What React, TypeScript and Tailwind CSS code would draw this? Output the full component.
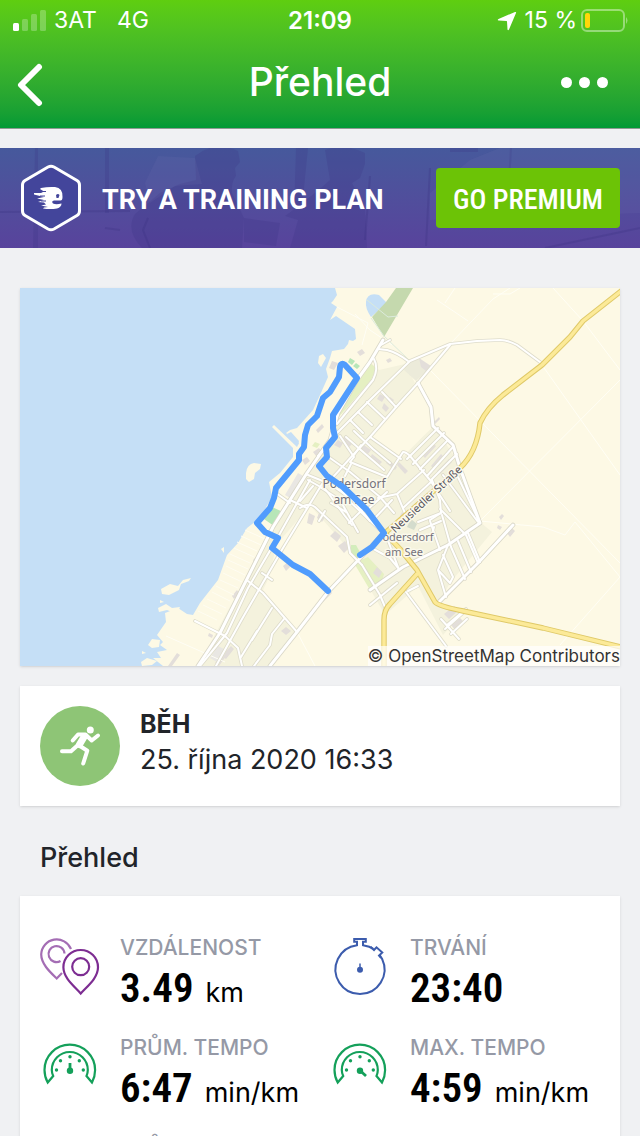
import type { ReactNode } from "react";

const MINOR_ROADS = [
	"M540 362L517 345Q508 340 500 340L477 341L450 344L410 361L370 400L337 433L318 456",
	"M450 345L418 383L397 406L370 437L353 455L334 476",
	"M408 361Q398 353 387 350L378 349",
	"M381 345L390 340",
	"M374 359Q379 368 373 380L337 424",
	"M310 480L278 537L248 588L227 633L200 666",
	"M322 484L283 548L242 619L216 666",
	"M248 581L263 593L297 632",
	"M262 573L272 580M290 500L307 508M276 493L290 503",
	"M272 608L252 640M257 631L241 657M284 619L272 634L270 645L254 666",
	"M195 621L225 636L238 648L242 666",
	"M382 392L396 407M367 402L385 419M358 412L372 425M350 420L363 433",
	"M340 436L354 457L350 462L387 477L403 452Q406 452 410 456L430 480L450 511",
	"M354 431L373 449L390 463M346 437L362 451L384 470",
	"M370 437L401 459M330 458L350 472L380 497L394 513",
	"M308 475L330 484L353 500L370 521",
	"M308 480L326 490L345 516L352 525",
	"M320 487L340 500L358 532M331 503L346 512M325 511L319 521",
	"M300 508Q309 502 315 507L347 537L350 553L362 565",
	"M345 497L380 530M367 510L387 492M349 523L363 509M337 487L349 498",
	"M351 464L345 476M361 445L354 455",
	"M407 459L438 428M413 464L444 433M420 469L448 440M427 476L453 447M431 480L457 454",
	"M378 498L397 494L424 470M397 494L407 518M403 508L432 481",
	"M432 480L440 500L441 513L430 520M440 490L461 470M440 509L456 525L466 535L478 563",
	"M443 475L458 495L478 522M457 475L480 523",
	"M418 522L441 513M420 530L441 521M434 527L432 535M442 515L451 547L465 579M430 521L440 550",
	"M458 541L471 572M468 533L480 562",
	"M448 545L438 570L446 597M438 570L450 583L453 577L443 555",
	"M387 538L398 567M370 547L390 558L399 569M418 586L408 591",
	"M362 565L380 595L385 607M406 592L446 646",
	"M447 625L466 609M441 619L459 639M451 634L467 619M445 629L464 612",
	"M397 583L370 605M392 500L374 519M313 486L300 501",
];

const MAIN_ROADS = [
	"M383 340L370 362L357 380L338 413L330 440L307 473L273 527L260 553L220 633L198 666",
	"M418 383L431 407L433 426L453 445L460 468L480 523L448 545L403 567L370 590",
	"M380 537L328 592L297 632L270 666",
	"M513 525L478 563L438 603",
];

const YELLOW_ROADS = [
	"M621 291L583 321L570 337L542 365L503 395Q487 408 480 423Q477 452 460 468L385 533L400 549L417 570L435 602Q438 606 463 611L543 628L621 647",
	"M417 574L390 604Q384 610 384 620L384 666",
];

const ROUTE =
	"M328 591L310 574L293 565L272 548L278 538L265 532L257 523L270 508L274 498L276 488L299 460L299 454L304 447L305 435L308 425L317 416L323 398L330 392L339 377L340 367Q341 362 345 365L357 378L333 415L333 428L335 437L326 448L327 457L319 466L327 476L343 487L367 510L384 533L372 547L360 555";

const BUILDINGS =
	"M357 352l5 -3 3 4 -5 3zM332 361l6 2 -4 7 -5 -2zM340 480l4 3 -3 3 -4 -3zM338 440l5 3 -3 5 -6 -3zM345 436l7 8 -3 3 -7 -8zM313 452l6 -4 3 4 -6 4zM316 430l6 -6 2 3 -6 6zM386 360l4 -2 2 3 -4 2zM419 358l12 8 -5 5 -5 -4zM380 394l5 3 -3 5 -5 -3zM384 403l5 5 -3 4 -4 -4zM390 397l4 3 -3 4 -4 -4zM361 443l10 7 -3 4 -9 -7zM372 454l10 8 -3 3 -9 -7zM388 459l9 8 -2 3 -9 -7zM399 462l9 9 -3 3 -8 -9zM422 455l11 -12 3 3 -11 12zM431 466l10 -12 3 3 -10 12zM437 471l12 -12 3 3 -12 12zM309 513l6 3 -3 9 -5 -2zM319 513l6 4 -3 5 -5 -4zM330 536l5 -5 6 5 -4 6zM338 546l7 -5 4 7 -5 5zM283 566l5 -4 3 4 -5 5zM253 560l5 -5 2 3 -5 6zM232 596l5 -6 2 3 -5 6zM321 598l8 -9 3 4 -9 9zM281 631l5 -4 5 4 -5 4zM209 633l4 2 -1 3 -4 -2zM226 651l5 -5 3 3 -8 10 -3 -2zM215 663l7 -9 4 2 -7 10zM377 567l5 5 -3 6 -6 -5zM444 614l10 -8 5 4 -10 9zM451 625l9 -7 4 4 -9 8zM499 517l3 -3 2 2 -3 4zM507 533l5 -5 3 3 -5 6zM498 525l4 2 -2 3 -3 -2zM434 422l5 -5 1 2 -5 5zM402 512l6 6 -3 3 -5 -5zM302 460l5 -3 3 4 -5 4zM180 655l-8 11 -4 0 9 -13z";

function RouteMap() {
	return (
		<svg viewBox="20 288 600 378" className="block w-full" role="img" aria-label="Mapa trasy">
			<rect x="20" y="288" width="600" height="378" fill="#c5dff6" />
			{/* shore */}
			<path fill="#fdf9e5" d="M335 288L337 295L333 301L331 303L337 307L330 320L336 316L355 329L356 339L353 341L349 340L348 344L344 349L332 351L330 358L326 369L328 377L320 395L313 410L297 428L290 430L286 433L299 443L297 447L274 425L272 427L293 448L293 457L280 473L269 482L272 497L260 518L247 528L238 543L227 555L218 580L200 603L193 615L187 614L178 608L165 613L166 622L157 635L163 642L160 645L167 650L157 652L161 658L153 658L163 666H620V288Z" />
			<path fill="#fdf9e5" d="M246 473Q247 464 254 463L261 464L260 469L255 473L254 479L249 482L246 479ZM319 356L323 354L326 358L321 367L318 363ZM221 549L224 547L224 553ZM161 589L170 584L178 586L183 580L191 578L189 581L181 584L179 590L169 595L162 594ZM160 600l4 2 -4 1zM158 608l8 -4 6 4 8 -1 -3 7 -10 -4 -8 2zM148 645l4 -6 8 1 -1 7 -7 1zM142 651l4 2 -4 1zM141 662l6 -4 10 3 -5 4 -10 1z" />
			<path fill="#c5dff6" d="M366 302Q367 292 379 295L387 303L371 317Q365 308 366 302ZM287 434L291 432L299 441L298 445Z" />
			<path fill="#c5d9ae" d="M396 288H413L384 337L372 317L386 302Z" />
			{/* built-up area */}
			<path fill="#f4f2dd" d="M370 362L379 370L405 364L415 383L396 407L370 437L401 457L434 426L460 465L480 522L492 532L450 583L438 604L466 610L443 635L418 586L385 615L362 575L345 545L308 503L284 547L263 590L297 630L270 666H198L273 527L318 460Z" />
			<path fill="#fdf9e5" d="M370 437L418 385L431 407L433 426L404 456L372 438ZM307 509L345 545L350 555L330 588L297 630L265 592L277 544Z" />
			<path fill="#ecebda" d="M409 361L419 358L430 368L416 381L404 370Z" />
			<path fill="#e5f0c2" d="M370 363L376 368L371 380L337 419L336 414ZM354 563L368 557L384 574L382 581L370 590ZM315 442l5 2 -3 4 -5 -2z" />
			<path fill="#d3edbb" d="M351 545L356 545L362 556L355 560L351 553Z" />
			<path fill="#b7e6b8" d="M272 507L283 512L274 526L264 519ZM350 358l5 3 -3 4 -4 -3zM356 363l4 3 -3 3 -4 -3zM348 365l4 3 -3 3z" />
			<path fill="#e9e7e3" d="M298 473L305 477L292 499L285 495ZM218 646l8 4 -9 12 -7 -4z" />
			<path fill="#e3deda" d={BUILDINGS} />
			<path fill="#d4dccd" d="M411 519l6 5 -3 6 -7 -3z" />
			{/* beach plots */}
			<path stroke="#fffdf2" fill="none" d="M245 530l20 9M241 536l20 9M237 542l20 9M234 548l20 9M230 554l20 9M228 560l20 9M226 566l19 9M223 573l19 9M220 580l18 8M216 586l18 9M212 592l18 9M207 599l19 9M203 605l19 9M198 611l19 9" />
			{/* field tracks */}
			<path stroke="#fffef5" fill="none" d="M450 344L493 299L510 288M468 321L437 300M445 303L455 288M493 294L510 294L520 288M542 365L620 475M430 370L620 563M480 521L620 380M553 288L583 321L620 370M575 522L620 577L560 645M480 521L543 527L565 535L575 522M166 636L225 662M297 632L315 666M337 307L368 323L362 345M355 314L370 330L392 345" />
			<path stroke="#dcebdc" fill="none" d="M367 300L388 317L398 316M371 318L384 336L410 361" />
			<g fill="none" strokeLinejoin="round" strokeLinecap="round">
				{MINOR_ROADS.map((d) => <path key={d} d={d} stroke="#dedccb" strokeWidth="3.6" />)}
				{MAIN_ROADS.map((d) => <path key={d} d={d} stroke="#d9d7c7" strokeWidth="4.6" />)}
				{MINOR_ROADS.map((d) => <path key={d} d={d} stroke="#fff" strokeWidth="2" />)}
				{MAIN_ROADS.map((d) => <path key={d} d={d} stroke="#fff" strokeWidth="3" />)}
				{YELLOW_ROADS.map((d) => <path key={d} d={d} stroke="#dfc968" strokeWidth="5.4" />)}
				{YELLOW_ROADS.map((d) => <path key={d} d={d} stroke="#fcea98" strokeWidth="3.4" />)}
			</g>
			<g className="font-['Noto_Sans',sans-serif]" fill="#74717b" stroke="#fbf9ec" strokeWidth="3" paintOrder="stroke" strokeLinejoin="round" textAnchor="middle">
				<text x="354" y="488" fontSize="12">Podersdorf</text>
				<text x="354" y="504" fontSize="12">am See</text>
				<text x="408" y="541" fontSize="11">odersdorf</text>
				<text x="404" y="556" fontSize="11">am See</text>
				<text transform="translate(429 502) rotate(-43)" fontSize="11" fill="#55535c">Neusiedler Straße</text>
			</g>
			<path d={ROUTE} fill="none" stroke="#509cfd" strokeWidth="6" strokeLinejoin="round" strokeLinecap="round" />
		</svg>
	);
}

function PinsIcon() {
	return (
		<svg viewBox="0 0 60 76" className="w-15 shrink-0 self-start" fill="none" strokeWidth="2.2" aria-hidden="true">
			<path stroke="#a46db4" d="M31 15A15.500 15.500 0 0 0 1.200 20.300C1.200 30 10 38 16.700 44.500L22 39" />
			<path stroke="#a46db4" d="M24.500 19.500A8 8 0 1 0 20.500 27" />
			<path stroke="#7d2d92" d="M40.700 59.500C34 52 23.400 44 23.400 33.300A17.300 17.300 0 0 1 58 33.300C58 44 47.500 52 40.700 59.500Z" />
			<circle stroke="#7d2d92" cx="40.700" cy="32.700" r="8.500" />
		</svg>
	);
}

function StopwatchIcon() {
	return (
		<svg viewBox="0 0 60 76" className="w-15 shrink-0 self-start" fill="none" stroke="#3c5cad" strokeWidth="2" aria-hidden="true">
			<path d="M27 11.200A24.500 24.500 0 1 0 33 11.200V7.800H35.800V5H24.200V7.800H27Z" />
			<path stroke="#fff" strokeWidth="4" d="M43 15L49.500 20.500" />
			<path d="M40.500 12.800L44 16L46.500 13.300L52.300 18.500L49 21.500L51 24" />
			<circle cx="30" cy="35.700" r="3" fill="#3c5cad" stroke="none" />
			<path strokeWidth="1.500" d="M30 29.500V35" />
		</svg>
	);
}

function GaugeIcon({ fast = false }: { fast?: boolean }) {
	return (
		<svg viewBox="0 1 60 76" className="w-15 shrink-0 self-start" fill="none" stroke="#14a05a" strokeWidth="2.200" aria-hidden="true">
			<path d="M7.700 49.500C5.200 45 4.500 41 4.500 37A25.300 25.300 0 0 1 55.100 37C55.100 41 54.400 45 52 49.500L46.500 43Q47.800 40 47.800 37A18 18 0 0 0 11.800 37Q11.800 40 13.200 43Z" />
			<g fill="#14a05a" stroke="none">
				<circle cx="16.500" cy="37" r="1.700" />
				<circle cx="20.500" cy="27.700" r="1.700" />
				<circle cx="30" cy="23.700" r="1.700" />
				<circle cx="39.300" cy="27.700" r="1.700" />
				<circle cx="43.300" cy="37" r="1.700" />
				<circle cx="30" cy="37.700" r="3.200" />
			</g>
			<path strokeWidth="2.800" d={fast ? "M30 37.500L36 43" : "M30 37.500V30"} />
		</svg>
	);
}

function Stat({ icon, label, value, unit }: { icon: ReactNode; label: string; value?: string; unit?: string }) {
	return (
		<div className="flex gap-5">
			{icon}
			<dl>
				<dt className="text-[21px] leading-7 font-medium text-[#9599a6]">{label}</dt>
				{value && (
					<dd className="h-12 whitespace-nowrap text-black">
						<span className="font-['Roboto_Condensed','Liberation_Sans_Narrow',sans-serif] text-[41px] leading-[52px] font-semibold">{value}</span>
						{unit && <span className="ml-3 text-[27px] leading-none">{unit}</span>}
					</dd>
				)}
			</dl>
		</div>
	);
}

function StatusBar() {
	return (
		<div className="flex h-[41px] items-center px-3 text-[23px]">
			<div className="flex flex-1 items-center gap-2">
				<svg viewBox="0 0 34 22" className="w-[34px]" fill="#fff" aria-hidden="true">
					<rect x="1" y="13" width="6" height="8" rx="1.500" />
					<g opacity="0.250">
						<rect x="10" y="9" width="6" height="12" rx="1.500" />
						<rect x="19" y="4" width="6" height="17" rx="1.500" />
						<rect x="28" y="0" width="6" height="21" rx="1.500" />
					</g>
				</svg>
				<span>3AT</span>
				<span className="ml-3">4G</span>
			</div>
			<span className="text-[24px] font-semibold">21:09</span>
			<div className="flex flex-1 items-center justify-end gap-1">
				<svg viewBox="0 0 20 20" className="mr-1 w-5" fill="#fff" aria-hidden="true">
					<path d="M18 1Q19.500 .5 19 2L12 18.500Q11 20 10.500 18.500L10 10.500Q10 10 9.500 10L1.500 9.500Q0 9 1.500 8Z" />
				</svg>
				<span>15 %</span>
				<svg viewBox="0 0 47 24" className="w-[47px]" aria-hidden="true">
					<rect x="1" y="1" width="42" height="21" rx="5" fill="none" stroke="#fff" strokeOpacity="0.400" strokeWidth="2" />
					<rect x="4" y="4" width="5" height="15" rx="2" fill="#ffd60a" />
					<path d="M45 8Q48 11.500 45 15Z" fill="#fff" fillOpacity="0.400" />
				</svg>
			</div>
		</div>
	);
}

function PremiumBanner() {
	return (
		<section className="relative flex h-25 items-center bg-linear-to-b from-[#46599c] to-[#58439c] px-5 text-white">
			<svg viewBox="0 0 640 100" preserveAspectRatio="none" className="absolute inset-0 size-full" aria-hidden="true">
				<g fill="#3c3485" opacity="0.240">
					<path d="M195 8Q215 -8 238 3L240 14L235 20L236 28Q231 34 232 45L244 70L242 100H142Q125 82 135 66L160 45L180 36L196 32Z" />
					<path d="M325 2Q345 -5 365 5L365 16L360 30L352 35L365 60L367 100H290L298 72L285 68Q310 50 330 32Z" />
					<path d="M35 0H38V100H33ZM105 0H109V65H105ZM244 70L280 75L276 98L244 94ZM510 0H512L508 66H506ZM296 0H308L302 60L294 64ZM450 0H478V4H450Z" />
				</g>
				<g fill="none" stroke="#37307d" strokeOpacity="0.240">
					<path d="M0 64L130 63M370 28L365 92M430 20L426 98M640 80L545 100M105 80L120 82M148 70L143 82L150 100" strokeWidth="2" />
				</g>
				<path fill="#7f78b8" opacity="0.120" d="M158 8L195 10L202 36L175 38L150 55L145 35ZM430 45L470 12L500 0H640V65L430 72Z" />
			</svg>
			<svg viewBox="0 0 62 68" className="relative w-[62px] shrink-0" aria-hidden="true">
				<path d="M28 3Q31 1.500 34 3L57 16.500Q59.500 18 59.500 21V47Q59.500 50 57 51.500L34 65Q31 66.500 28 65L5 51.500Q2.500 50 2.500 47V21Q2.500 18 5 16.500Z" fill="#43459b" stroke="#fff" strokeWidth="3" />
				<path fill="#fff" d="M21 24Q28 22.500 35 23Q43 24 42.500 33Q42.500 37 40 36.500L34 36.500Q31 37 33 39.500Q36 41 41.500 39.500Q41.500 43 37 44.500Q30 45.500 23 44.500L24 43.500L28 43L21 41.500L26 40.500L24 38.500L18 38L24 36L17 34.500L24 33L14 30.500V29H21L24 27.500L20 25Z" />
				<path fill="#43459b" d="M36 31Q38 29 39.500 31L38.500 34H36.500Z" />
				<path stroke="#43459b" d="M20 27.500H26M20 32H25M21 37H26" />
			</svg>
			<p className="relative ml-5 flex-1 pt-1 font-['Roboto',sans-serif] text-[27px] font-bold whitespace-nowrap">TRY A TRAINING PLAN</p>
			<button type="button" className="relative h-15 w-46 rounded bg-[#6cc306] pt-1 font-['Roboto_Condensed','Liberation_Sans_Narrow',sans-serif] text-[28px] font-medium whitespace-nowrap">GO PREMIUM</button>
		</section>
	);
}

export default function App() {
	return (
		<div className="flex h-screen flex-col overflow-hidden bg-[#f0f1f3] font-['Inter',sans-serif] text-[#212429]">
			<header className="shrink-0 border-b border-[#8d9b93] bg-linear-to-b from-[#5fce10] to-[#009a35] text-white">
				<StatusBar />
				<div className="grid h-[87px] grid-cols-[1fr_auto_1fr] items-center px-3 pb-1">
					<button type="button" aria-label="Zpět" className="w-10 justify-self-start">
						<svg viewBox="0 0 40 48" className="w-10" fill="none" stroke="#fff" strokeWidth="6" strokeLinecap="round" strokeLinejoin="round">
							<path d="M27 8L9 26L27 44" />
						</svg>
					</button>
					<h1 className="text-[39px] font-medium">Přehled</h1>
					<button type="button" aria-label="Další" className="mr-5 flex gap-[7px] justify-self-end">
						<span className="size-[11px] rounded-full bg-white" />
						<span className="size-[11px] rounded-full bg-white" />
						<span className="size-[11px] rounded-full bg-white" />
					</button>
				</div>
			</header>

			<main className="flex-1 overflow-hidden pt-[19px]">
				<PremiumBanner />

				<figure className="relative mx-5 mt-10 shadow-sm">
					<RouteMap />
					<figcaption className="absolute right-0 bottom-0 bg-white/70 text-[17px] leading-5 text-[#333]">© OpenStreetMap Contributors</figcaption>
				</figure>

				<section className="mx-5 mt-5 flex gap-5 bg-white p-5 shadow-sm">
					<svg viewBox="0 0 80 80" className="size-20 shrink-0 rounded-full bg-[#8ec576]" fill="none" stroke="#fff" strokeWidth="4" strokeLinecap="round" strokeLinejoin="round" aria-hidden="true">
						<circle cx="50.300" cy="24" r="3.500" fill="#fff" stroke="none" />
						<path d="M32.700 34.500L38 28.500H45.500L51.700 34.500L58 29.500" />
						<path d="M22 45.300H31L38 39" />
						<path d="M40 40L47.300 44.700L43.200 57.500" />
						<path d="M44 31L39.500 38.500" strokeWidth="7" />
					</svg>
					<div>
						<h2 className="text-[25px] leading-9 font-bold">BĚH</h2>
						<p className="text-[27px] leading-9">25. října 2020 16:33</p>
					</div>
				</section>

				<h2 className="mx-10 mt-8 text-[27px] leading-10 font-medium">Přehled</h2>

				<section className="mx-5 mt-[18px] grid grid-cols-2 gap-y-6 bg-white pt-[38px] pb-9 pl-5 shadow-sm">
					<Stat icon={<PinsIcon />} label="VZDÁLENOST" value="3.49" unit="km" />
					<Stat icon={<StopwatchIcon />} label="TRVÁNÍ" value="23:40" />
					<Stat icon={<GaugeIcon />} label="PRŮM. TEMPO" value="6:47" unit="min/km" />
					<Stat icon={<GaugeIcon fast />} label="MAX. TEMPO" value="4:59" unit="min/km" />
					<Stat icon={<GaugeIcon />} label="PRŮM." />
				</section>
			</main>
		</div>
	);
}
